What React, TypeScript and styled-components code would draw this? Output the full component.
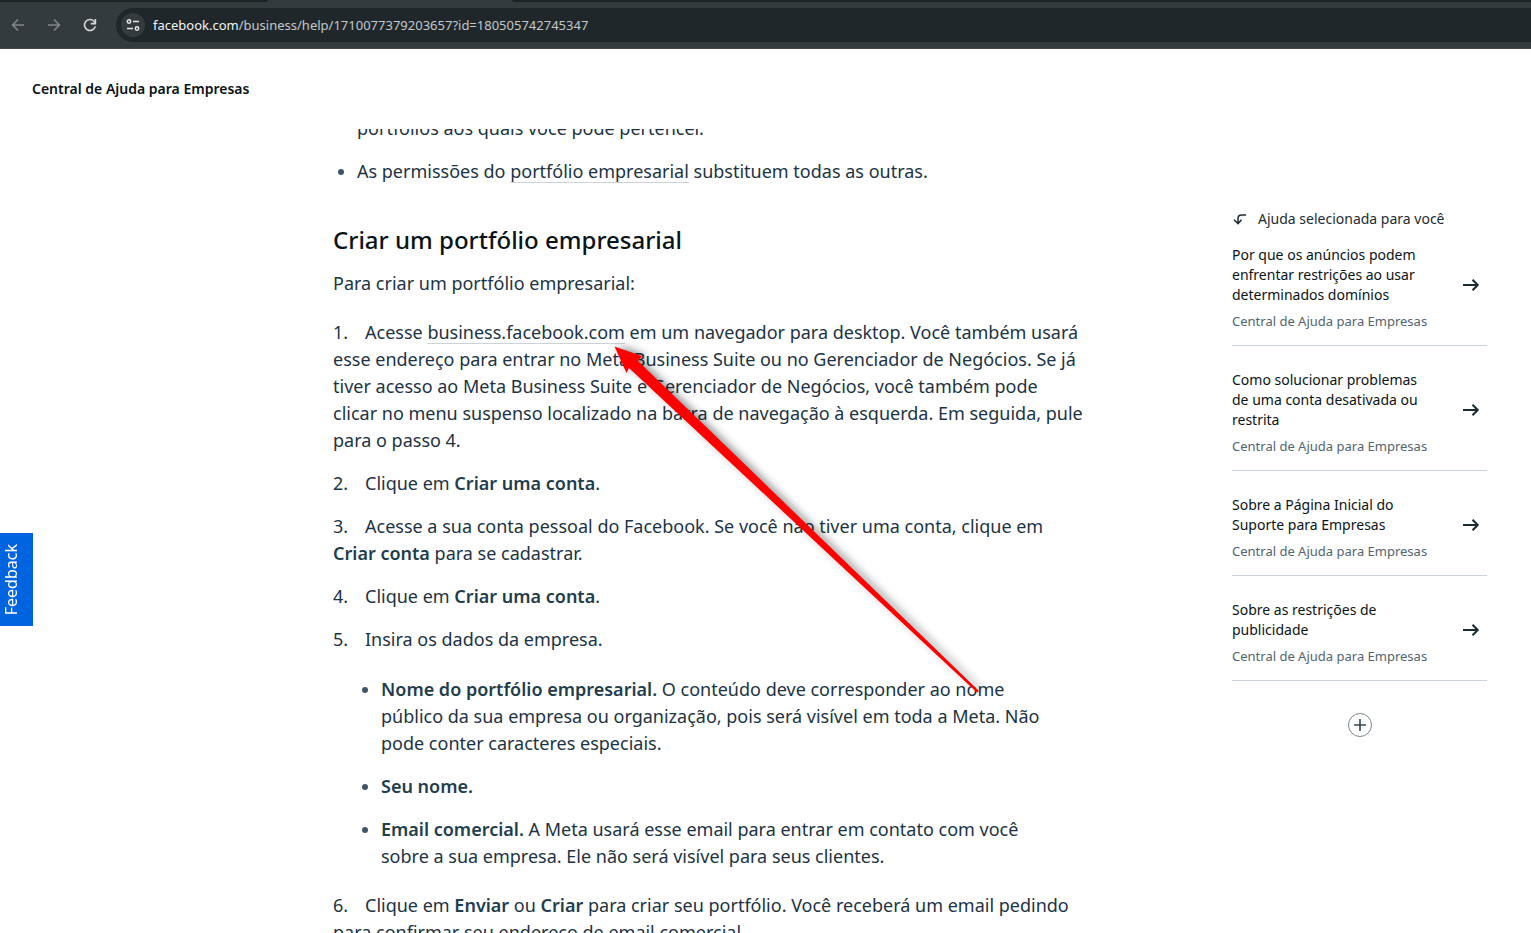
import React from 'react';
import styled, { createGlobalStyle } from 'styled-components';

const Global = createGlobalStyle`
  *, *::before, *::after { box-sizing: border-box; }
  html, body { margin: 0; padding: 0; }
  body {
    background: #ffffff;
    color: #1c2b33;
    font-family: "Noto Sans", "Open Sans", sans-serif;
  }
  ul, ol, p, h2 { margin: 0; padding: 0; }
  ul, ol { list-style: none; }
  button { font: inherit; border: 0; padding: 0; background: none; cursor: pointer; }
`;

const Page = styled.div`
  display: flex;
  flex-direction: column;
  height: 100vh;
  overflow: hidden;
  position: relative;
`;

const Browser = styled.header`
  flex: none;
  background: #343b3e;
  border-bottom: 1px solid #434749;
`;

const TabStrip = styled.div`
  display: flex;
  justify-content: space-between;
  height: 2px;
`;

const InactiveTabs = styled.div<{ $side: 'left' | 'right' }>`
  width: ${(p) => (p.$side === 'left' ? '268px' : 'calc(100% - 512px)')};
  background: #1b2325;
  border-radius: ${(p) => (p.$side === 'left' ? '0 0 4px 0' : '0 0 0 4px')};
`;

const Toolbar = styled.div`
  display: flex;
  align-items: center;
  gap: 18px;
  padding: 6px 0 6px 10px;
`;

const NavButtons = styled.div`
  display: flex;
  gap: 20px;
`;

const NavButton = styled.button<{ $dim?: boolean }>`
  display: grid;
  place-items: center;
  width: 16px;
  height: 16px;
  color: ${(p) => (p.$dim ? '#80878a' : '#d3d8da')};
`;

const AddressBar = styled.div`
  flex: 1;
  display: flex;
  align-items: center;
  gap: 8px;
  height: 34px;
  padding-left: 5px;
  background: #1f272a;
  border-radius: 17px 0 0 17px;
`;

const SiteButton = styled.button`
  display: grid;
  place-items: center;
  width: 24px;
  height: 24px;
  border-radius: 50%;
  background: #343b3e;
  color: #e3e6e8;
`;

const Url = styled.span`
  font-size: 13px;
  line-height: 20px;
  color: #c3c9cc;
  b { font-weight: 400; color: #f1f3f4; }
`;

const SiteHeader = styled.div`
  flex: none;
  display: flex;
  align-items: center;
  height: 80px;
  padding: 0 32px;
`;

const SiteTitle = styled.a`
  font-size: 14px;
  line-height: 20px;
  font-weight: 600;
  color: #0a1317;
  text-decoration: none;
`;

const Main = styled.main`
  flex: 1;
  min-height: 0;
  overflow: hidden;
  display: flex;
  justify-content: space-between;
  align-items: flex-start;
  padding: 0 44px 0 333px;
`;

const Article = styled.article`
  flex: 0 1 750px;
  margin-top: -14px;
  font-size: 18px;
  line-height: 27px;
  color: #1c3344;
  strong { font-weight: 600; color: #1f3d4d; }
`;

const Heading = styled.h2`
  margin: 39px 0 14px;
  font-size: 24px;
  line-height: 32px;
  font-weight: 500;
  color: #0a1317;
`;

const InlineLink = styled.a`
  color: inherit;
  text-decoration: underline 1px #cbd2d9;
  text-decoration-skip-ink: none;
  text-underline-offset: 4px;
`;

const Bullets = styled.ul<{ $nested?: boolean }>`
  display: flex;
  flex-direction: column;
  gap: 16px;
  padding: ${(p) => (p.$nested ? '0 18px 0 48px' : '0 0 0 24px')};
  margin: ${(p) => (p.$nested ? '23px 0 6px' : '0')};
`;

const Bullet = styled.li<{ $continued?: boolean }>`
  position: relative;
  &::before {
    content: "";
    display: ${(p) => (p.$continued ? 'none' : 'block')};
    position: absolute;
    left: -19px;
    top: 11px;
    width: 6px;
    height: 6px;
    border-radius: 50%;
    background: #3f5564;
  }
`;

const Steps = styled.ol`
  display: flex;
  flex-direction: column;
  gap: 16px;
  margin-top: 22px;
`;

const StepNumber = styled.span`
  display: inline-block;
  width: 32px;
`;

const Aside = styled.aside`
  flex: none;
  width: 255px;
  padding-top: 80px;
  color: #1c2b33;
`;

const AsideTitle = styled.div`
  display: flex;
  align-items: center;
  gap: 10px;
  font-size: 14px;
  line-height: 20px;
`;

const Cards = styled.ul`
  margin-top: -8px;
`;

const Card = styled.li`
  border-bottom: 1px solid #cbd2d9;
`;

const CardLink = styled.a`
  display: flex;
  align-items: center;
  justify-content: space-between;
  padding: 24px 7px 16px 0;
  color: #0a1317;
  text-decoration: none;
  svg { flex: none; margin-bottom: 4px; }
`;

const CardTitle = styled.div`
  width: 200px;
  font-size: 14px;
  line-height: 20px;
`;

const CardSource = styled.div`
  margin-top: 8px;
  font-size: 13px;
  line-height: 16px;
  color: #52646f;
  white-space: nowrap;
`;

const MoreButton = styled.button`
  display: grid;
  place-items: center;
  width: 24px;
  height: 24px;
  margin: 32px auto 0;
  border: 1px solid #7b868c;
  border-radius: 50%;
  color: #344854;
`;

const Feedback = styled.button`
  position: absolute;
  left: 0;
  top: 533px;
  width: 33px;
  height: 93px;
  background: #0064e0;
  color: #ffffff;
  display: grid;
  place-items: center;
  span {
    writing-mode: vertical-rl;
    transform: rotate(180deg);
    font-size: 16px;
    line-height: 20px;
    margin-right: 11px;
  }
`;

const Pointer = styled.svg`
  position: absolute;
  left: 590px;
  top: 320px;
  overflow: visible;
  pointer-events: none;
  filter: drop-shadow(3px -1px 4px rgba(0, 0, 0, 0.45));
`;

const Back = () => (
  <svg width="16" height="16" viewBox="0 0 16 16" fill="none" stroke="currentColor" strokeWidth="1.5">
    <path d="M14 8H3M8 2.5L2.5 8L8 13.5" />
  </svg>
);

const Forward = () => (
  <svg width="16" height="16" viewBox="0 0 16 16" fill="none" stroke="currentColor" strokeWidth="1.5">
    <path d="M2 8H13M8 2.5L13.5 8L8 13.5" />
  </svg>
);

const Reload = () => (
  <svg width="16" height="16" viewBox="0 0 16 16" fill="none" stroke="currentColor" strokeWidth="1.6">
    <path d="M13.3 9.400A5.500 5.500 0 1 1 12 4.200L13.400 6" />
    <path d="M13.400 2V6.600H8.800" />
  </svg>
);

const Tune = () => (
  <svg width="14" height="14" viewBox="0 0 14 14" fill="none" stroke="currentColor" strokeWidth="1.5">
    <circle cx="3" cy="3.5" r="1.7" />
    <path d="M7 3.5H13M1 10.5H7" />
    <circle cx="11" cy="10.5" r="1.7" />
  </svg>
);

const Curve = () => (
  <svg width="16" height="16" viewBox="0 0 16 16" fill="none" stroke="#1c2b33" strokeWidth="1.5">
    <path d="M14 4H9.500Q6 4 6 7.500V12" />
    <path d="M2 8.700L6 12.600L9.500 8.700" />
  </svg>
);

const ArrowRight = () => (
  <svg width="18" height="14" viewBox="0 0 18 14" fill="none" stroke="#1c2b33" strokeWidth="2">
    <path d="M1 7H16M10.500 1.700L15.800 7L10.500 12.300" strokeLinejoin="round" />
  </svg>
);

const Plus = () => (
  <svg width="12" height="12" viewBox="0 0 12 12" fill="none" stroke="currentColor" strokeWidth="1.6">
    <path d="M0 6H12M6 0V12" />
  </svg>
);

const suggestions = [
  'Por que os anúncios podem enfrentar restrições ao usar determinados domínios',
  'Como solucionar problemas de uma conta desativada ou restrita',
  'Sobre a Página Inicial do Suporte para Empresas',
  'Sobre as restrições de publicidade',
];

const Step = ({ n, children }: { n: number; children: React.ReactNode }) => (
  <li>
    <StepNumber>{n}.</StepNumber>
    {children}
  </li>
);

export default function App() {
  return (
    <>
      <Global />
      <Page>
        <Browser>
          <TabStrip>
            <InactiveTabs $side="left" />
            <InactiveTabs $side="right" />
          </TabStrip>
          <Toolbar>
            <NavButtons>
              <NavButton $dim aria-label="Voltar"><Back /></NavButton>
              <NavButton $dim aria-label="Avançar"><Forward /></NavButton>
              <NavButton aria-label="Recarregar"><Reload /></NavButton>
            </NavButtons>
            <AddressBar>
              <SiteButton aria-label="Informações do site"><Tune /></SiteButton>
              <Url><b>facebook.com</b>/business/help/1710077379203657?id=180505742745347</Url>
            </AddressBar>
          </Toolbar>
        </Browser>
        <SiteHeader>
          <SiteTitle href="#">Central de Ajuda para Empresas</SiteTitle>
        </SiteHeader>
        <Main>
          <Article>
            <Bullets>
              <Bullet $continued>portfólios aos quais você pode pertencer.</Bullet>
              <Bullet>
                As permissões do <InlineLink href="#">portfólio empresarial</InlineLink> substituem todas as outras.
              </Bullet>
            </Bullets>
            <Heading>Criar um portfólio empresarial</Heading>
            <p>Para criar um portfólio empresarial:</p>
            <Steps>
              <Step n={1}>
                Acesse <InlineLink href="#">business.facebook.com</InlineLink> em um navegador para desktop. Você também
                usará esse endereço para entrar no Meta Business Suite ou no Gerenciador de Negócios. Se já tiver acesso
                ao Meta Business Suite e Gerenciador de Negócios, você também pode clicar no menu suspenso localizado na
                barra de navegação à esquerda. Em seguida, pule para o passo 4.
              </Step>
              <Step n={2}>Clique em <strong>Criar uma conta</strong>.</Step>
              <Step n={3}>
                Acesse a sua conta pessoal do Facebook. Se você não tiver uma conta, clique em{' '}
                <strong>Criar conta</strong> para se cadastrar.
              </Step>
              <Step n={4}>Clique em <strong>Criar uma conta</strong>.</Step>
              <Step n={5}>
                Insira os dados da empresa.
                <Bullets $nested>
                  <Bullet>
                    <strong>Nome do portfólio empresarial.</strong> O conteúdo deve corresponder ao nome público da sua
                    empresa ou organização, pois será visível em toda a Meta. Não pode conter caracteres especiais.
                  </Bullet>
                  <Bullet><strong>Seu nome.</strong></Bullet>
                  <Bullet>
                    <strong>Email comercial.</strong> A Meta usará esse email para entrar em contato com você sobre a
                    sua empresa. Ele não será visível para seus clientes.
                  </Bullet>
                </Bullets>
              </Step>
              <Step n={6}>
                Clique em <strong>Enviar</strong> ou <strong>Criar</strong> para criar seu portfólio. Você receberá um
                email pedindo para confirmar seu endereço de email comercial.
              </Step>
            </Steps>
          </Article>
          <Aside>
            <AsideTitle><Curve />Ajuda selecionada para você</AsideTitle>
            <Cards>
              {suggestions.map((title) => (
                <Card key={title}>
                  <CardLink href="#">
                    <div>
                      <CardTitle>{title}</CardTitle>
                      <CardSource>Central de Ajuda para Empresas</CardSource>
                    </div>
                    <ArrowRight />
                  </CardLink>
                </Card>
              ))}
            </Cards>
            <MoreButton aria-label="Ver mais"><Plus /></MoreButton>
          </Aside>
        </Main>
        <Feedback><span>Feedback</span></Feedback>
        <Pointer width="400" height="380" viewBox="590 320 400 380">
          <path d="M614.500 346.500L642 356L638 361L979 691L977 692.500L629 368L626.500 373Z" fill="#ff0000" />
        </Pointer>
      </Page>
    </>
  );
}
